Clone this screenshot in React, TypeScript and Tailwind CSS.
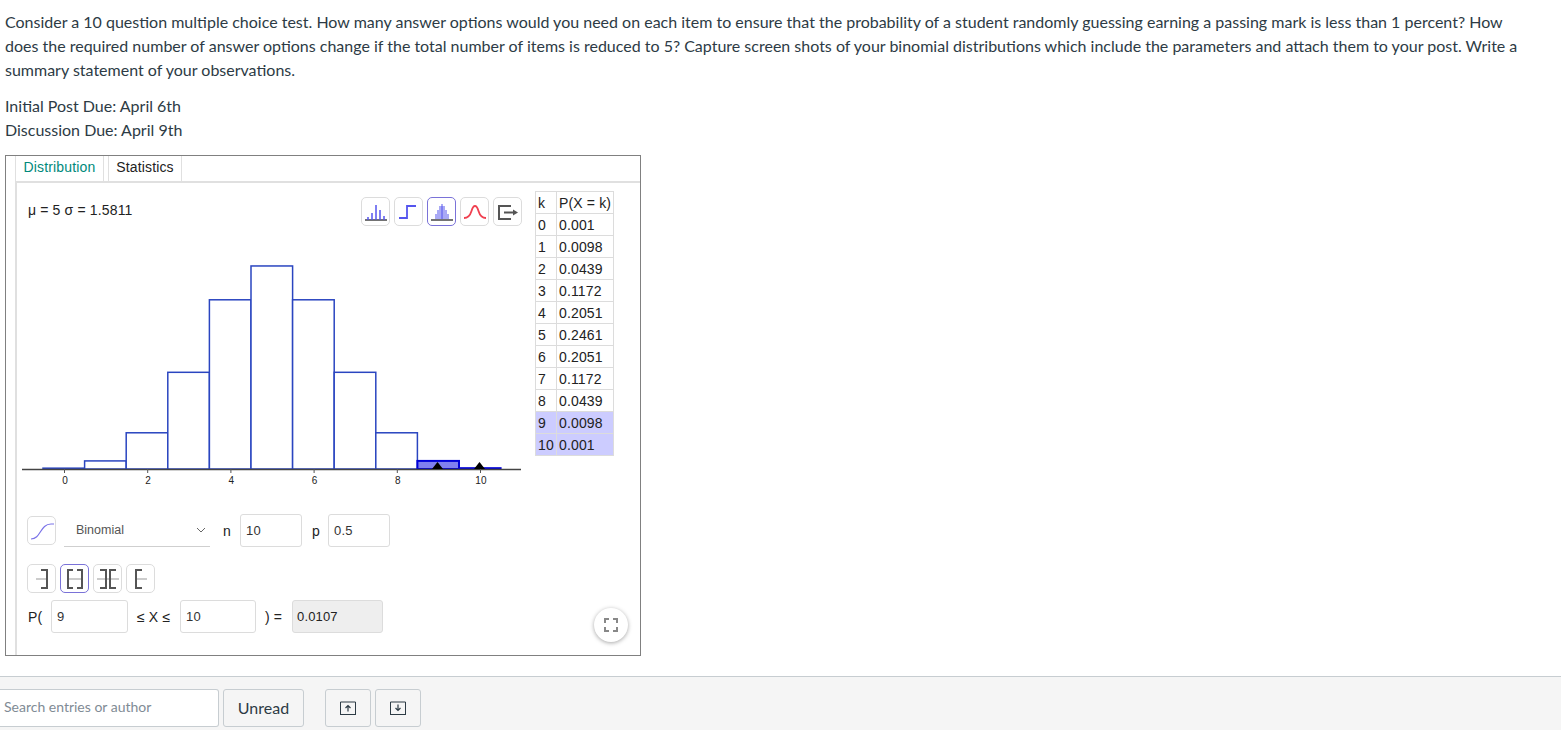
const rows = [
  ['0', '0.001'],
  ['1', '0.0098'],
  ['2', '0.0439'],
  ['3', '0.1172'],
  ['4', '0.2051'],
  ['5', '0.2461'],
  ['6', '0.2051'],
  ['7', '0.1172'],
  ['8', '0.0439'],
  ['9', '0.0098'],
  ['10', '0.001'],
]

const bars = [0.001, 0.0098, 0.0439, 0.1172, 0.2051, 0.2461, 0.2051, 0.1172, 0.0439, 0.0098, 0.001]

const Chart = () => {
  // svg origin sits at x=16, y=230 of the page
  const axisY = 239
  const x0 = 27
  const w = 41.6
  return (
    <svg width="514" height="262" className="block">
      {bars.map((p, i) => {
        const h = p * 825
        const shaded = i >= 9
        return (
          <rect
            key={i}
            x={x0 + i * w}
            y={axisY - h}
            width={w}
            height={h}
            fill={shaded ? '#8080f0' : '#fff'}
            stroke={shaded ? '#0000d8' : '#2a45c0'}
            strokeWidth={shaded ? 2 : 1.5}
          />
        )
      })}
      <line x1="6" y1={axisY + 0.5} x2="505" y2={axisY + 0.5} stroke="#444" strokeWidth="1.5" />
      {[0, 2, 4, 6, 8, 10].map((k) => (
        <g key={k}>
          <line x1={48.5 + k * w} y1={axisY} x2={48.5 + k * w} y2={axisY + 4} stroke="#555" />
          <text x={49 + k * w} y={axisY + 15} textAnchor="middle" fontSize="10" fontFamily="Liberation Sans" fill="#222">
            {k}
          </text>
        </g>
      ))}
      <polygon points="416,239 421.5,232 427,239" fill="#000" />
      <polygon points="458,239 463.5,232 469,239" fill="#000" />
    </svg>
  )
}

const IconBtn = ({ active, children }: { active?: boolean; children: React.ReactNode }) => (
  <div
    className={`flex h-[29px] w-[29px] items-center justify-center rounded-[5px] border bg-white ${
      active ? 'border-[#7a72d8]' : 'border-[#dcdcdc]'
    }`}
  >
    {children}
  </div>
)

const Field = ({ value, className }: { value: string; className: string }) => (
  <div className={`flex h-[33px] items-center rounded-[3px] border border-[#dcdcdc] bg-white pl-[5px] text-[13px] text-[#333] ${className}`}>
    {value}
  </div>
)

const Interval = ({ left, right }: { left?: boolean; right?: boolean }) => (
  <svg width="22" height="20" fill="none">
    {left && right && <line x1="4" y1="10" x2="18" y2="10" stroke="#bbb" strokeWidth="1.5" />}
    {left && !right && <line x1="6" y1="10" x2="17" y2="10" stroke="#bbb" strokeWidth="1.5" />}
    {right && !left && <line x1="5" y1="10" x2="16" y2="10" stroke="#bbb" strokeWidth="1.5" />}
    {left && <path d={right ? 'M9 1H4V19H9' : 'M12 1H6V19H12'} stroke="#555" strokeWidth="2" />}
    {right && <path d={left ? 'M13 1H18V19H13' : 'M10 1H16V19H10'} stroke="#555" strokeWidth="2" />}
  </svg>
)

export default function App() {
  return (
    <div className="flex h-[730px] w-[1561px] flex-col overflow-hidden bg-white font-['Lato',sans-serif] text-[#2d3b45]">
      <div className="w-[1530px] flex-1 px-[5px] pt-[10px] text-[16px] leading-[24px]">
        <p>
          Consider a 10 question multiple choice test. How many answer options would you need on each item to ensure
          that the probability of a student randomly guessing earning a passing mark is less than 1 percent? How does
          the required number of answer options change if the total number of items is reduced to 5? Capture screen
          shots of your binomial distributions which include the parameters and attach them to your post. Write a
          summary statement of your observations.
        </p>
        <p className="mt-3">Initial Post Due: April 6th</p>
        <p>Discussion Due: April 9th</p>

        <div className="mt-[13px] h-[501px] w-[636px] border border-[#808080] pl-[9px] font-['Liberation_Sans',sans-serif] text-[14px] leading-none tracking-[0.15px] text-[#222]">
          <div className="flex h-[27px] border-b-2 border-l border-[#e0e0e0]">
            <div className="flex w-[88px] items-center justify-center border-r border-[#e0e0e0] pb-[3px] text-[#00897b]">
              Distribution
            </div>
            <div className="ml-[4px] flex w-[74px] items-center justify-center border-x border-[#e0e0e0] pb-[3px]">
              Statistics
            </div>
          </div>

          <div className="h-[472px] border-l-2 border-[#e0e0e0] pl-[10px]">
            <div className="flex">
              <div className="w-[508px]">
                <div className="flex items-start justify-between pt-[14px]">
                  <div className="mt-[6px] pl-[1px]">μ = 5 σ = 1.5811</div>
                  <div className="mt-0 mr-[13px] flex gap-[4px]">
                    <IconBtn>
                      <svg width="22" height="20" fill="none">
                        <path d="M0 18H22" stroke="#444" strokeWidth="1.5" />
                        <path d="M3 18V15M7 18V11M11 18V3M15 18V8M19 18V14" stroke="#5555ee" strokeWidth="1.5" />
                      </svg>
                    </IconBtn>
                    <IconBtn>
                      <svg width="20" height="20" fill="none">
                        <path d="M0 16H8V4H17" stroke="#5555ee" strokeWidth="1.8" />
                      </svg>
                    </IconBtn>
                    <IconBtn active>
                      <svg width="22" height="20" fill="none">
                        <path d="M8 4H14V8H16V12H18V17H4V12H6V8H8Z" fill="#a9a9f5" />
                        <path d="M11 2V17" stroke="#5555ee" strokeWidth="1" />
                        <path d="M0 18H22" stroke="#444" strokeWidth="1.5" />
                      </svg>
                    </IconBtn>
                    <IconBtn>
                      <svg width="24" height="20" fill="none">
                        <path
                          d="M1 16C5 16 7 14 8.5 9C9.5 5.5 10.5 4 12 4C13.5 4 14.5 5.5 15.5 9C17 14 19 16 23 16"
                          stroke="#f04050"
                          strokeWidth="1.8"
                        />
                      </svg>
                    </IconBtn>
                    <IconBtn>
                      <svg width="22" height="20" fill="none">
                        <path d="M14 4H2V17H14" stroke="#555" strokeWidth="2" />
                        <path d="M7 10.5H17" stroke="#555" strokeWidth="2" />
                        <path d="M16 7.5L21 10.5L16 13.5Z" fill="#555" />
                      </svg>
                    </IconBtn>
                  </div>
                </div>
                <div className="-ml-[11px] mt-[4px]">
                  <Chart />
                </div>
              </div>
              <table className="mt-[8px] h-[265px] w-[79px] table-fixed border-collapse self-start whitespace-nowrap text-[14px]">
                <tbody>
                  <tr className="h-[22px]">
                    <td className="w-[21px] border border-[#dcdcdc] px-[2px]">k</td>
                    <td className="border border-[#dcdcdc] pl-[2px]">P(X = k)</td>
                  </tr>
                  {rows.map(([k, p], i) => (
                    <tr key={k} className={`h-[22px] ${i >= 9 ? 'bg-[#ccccff]' : ''}`}>
                      <td className="w-[21px] border border-[#dcdcdc] px-[2px]">{k}</td>
                      <td className="border border-[#dcdcdc] pl-[2px]">{p}</td>
                    </tr>
                  ))}
                </tbody>
              </table>
            </div>

            <div className="mt-[22px] flex items-center">
              <IconBtn>
                <svg width="26" height="22" fill="none">
                  <path d="M2 19C12 19 11 4 22 4H25" stroke="#7a72e8" strokeWidth="1.2" />
                </svg>
              </IconBtn>
              <div className="ml-[8px] flex h-[33px] w-[146px] items-center justify-between border-b border-[#cfcfcf] pl-[12px] pr-[4px] text-[12.5px] tracking-normal text-[#555]">
                Binomial
                <svg width="10" height="6" fill="none">
                  <path d="M1 1L5 5L9 1" stroke="#666" strokeWidth="1" />
                </svg>
              </div>
              <span className="ml-[13px] mr-[9px] w-[8px] text-[14px]">n</span>
              <Field value="10" className="w-[62px]" />
              <span className="ml-[10px] mr-[8px] w-[8px] text-[14px]">p</span>
              <Field value="0.5" className="w-[62px]" />
            </div>

            <div className="mt-[17px] flex gap-[4px]">
              <IconBtn>
                <Interval right />
              </IconBtn>
              <IconBtn active>
                <Interval left right />
              </IconBtn>
              <IconBtn>
                <svg width="22" height="20" fill="none">
                  <line x1="0" y1="10" x2="22" y2="10" stroke="#bbb" strokeWidth="1.5" />
                  <path d="M3 1H9V19H3M19 1H13V19H19" stroke="#555" strokeWidth="2" />
                </svg>
              </IconBtn>
              <IconBtn>
                <Interval left />
              </IconBtn>
            </div>

            <div className="relative mt-[7px] flex items-center text-[14px]">
              <span className="ml-[1px] w-[23px]">P(</span>
              <Field value="9" className="w-[77px]" />
              <span className="ml-[9px] w-[43px]">≤ X ≤</span>
              <Field value="10" className="w-[76px]" />
              <span className="ml-[9px] w-[27px]">) =</span>
              <div className="flex h-[33px] w-[91px] items-center rounded-[3px] border border-[#dcdcdc] bg-[#eeeeee] pb-[1px] pl-[4px] text-[13px]">
                0.0107
              </div>
              <div className="absolute right-[12px] top-[8px] flex h-[34px] w-[34px] items-center justify-center rounded-full bg-white shadow-[0_1px_4px_rgba(0,0,0,0.35)]">
                <svg width="14" height="14" fill="none">
                  <path d="M1 5V1H5M9 1H13V5M13 9V13H9M5 13H1V9" stroke="#888" strokeWidth="2" />
                </svg>
              </div>
            </div>
          </div>
        </div>
      </div>

      <div className="flex h-[54px] items-start border-t border-[#c7cdd1] bg-[#f5f5f5] pt-[12px]">
        <div className="flex h-[38px] w-[219px] items-center rounded-r-[3px] border border-l-0 border-[#c7cdd1] bg-white pb-[3px] pl-[4px] text-[14px] text-[#7f8b95]">
          Search entries or author
        </div>
        <div className="ml-[4px] flex h-[38px] w-[81px] items-center justify-center rounded-[3px] border border-[#c7cdd1] pb-[1px] text-[16px]">
          Unread
        </div>
        <div className="ml-[21px] flex h-[38px] w-[46px] items-center justify-center rounded-[3px] border border-[#c7cdd1]">
          <svg width="16" height="14" fill="none">
            <path d="M0.5 13V1H15.5V13M0 13.5H16" stroke="#2d3b45" />
            <path d="M8 10.5V4.5M5.5 7L8 4.5L10.5 7" stroke="#2d3b45" strokeWidth="1.2" />
          </svg>
        </div>
        <div className="ml-[4px] flex h-[38px] w-[46px] items-center justify-center rounded-[3px] border border-[#c7cdd1]">
          <svg width="16" height="14" fill="none">
            <path d="M0.5 13V1H15.5V13M0 13.5H16" stroke="#2d3b45" />
            <path d="M8 3.5V9.5M5.5 7L8 9.5L10.5 7" stroke="#2d3b45" strokeWidth="1.2" />
          </svg>
        </div>
      </div>
    </div>
  )
}
